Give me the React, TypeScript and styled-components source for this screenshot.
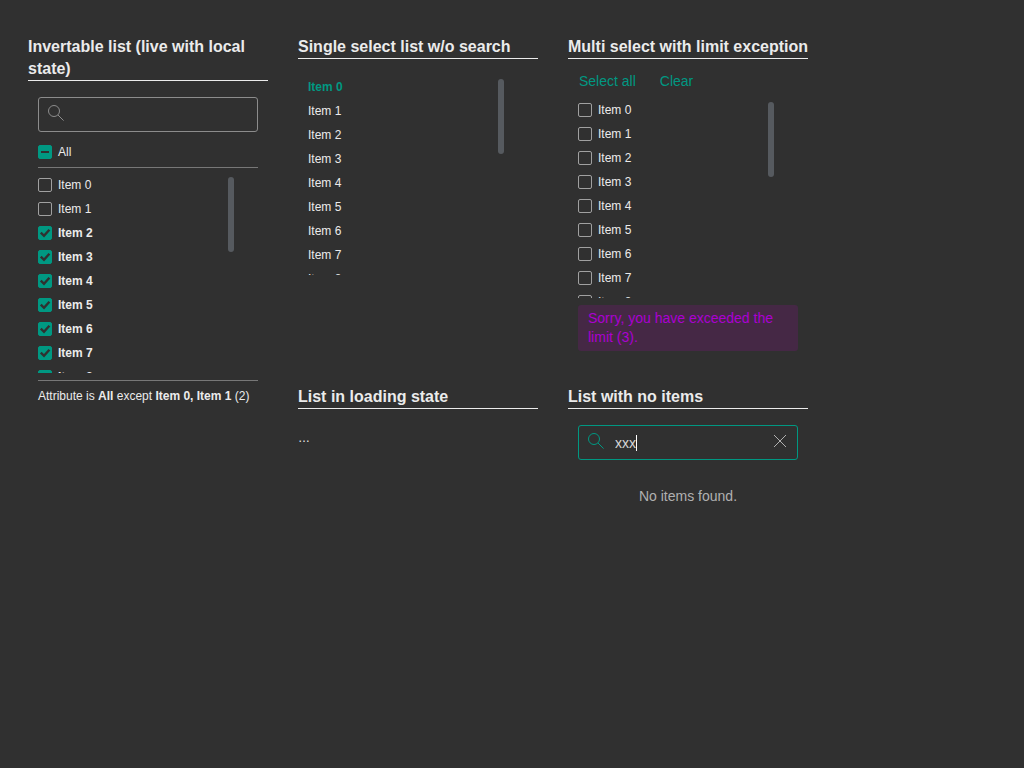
import React, { useState } from "react";
import styled, { createGlobalStyle, css } from "styled-components";

const teal = "#009882";
const page = "#303030";

const GlobalStyle = createGlobalStyle`
  *, *::before, *::after { box-sizing: border-box; }
  body {
    margin: 0;
    background: ${page};
    color: #ebebeb;
    font-family: Arial, "Liberation Sans", sans-serif;
    font-size: 14px;
    line-height: 19px;
    text-rendering: optimizeSpeed;
  }
`;

const Board = styled.main`
  display: grid;
  grid-template-columns: repeat(auto-fill, 240px);
  grid-template-rows: auto auto;
  align-items: start;
  gap: 35px 30px;
  padding: 36px 28px;
`;

const Card = styled.section<{ $tall?: boolean }>`
  grid-row: ${(p) => (p.$tall ? "span 2" : "auto")};
`;

const Title = styled.h4<{ $oneLine?: boolean }>`
  margin: 0;
  border-bottom: 1px solid #ebebeb;
  font-size: 16px;
  line-height: 22px;
  white-space: ${(p) => (p.$oneLine ? "nowrap" : "normal")};
`;

const Content = styled.div<{ $top: number }>`
  padding: ${(p) => p.$top}px 10px 0;
`;

const SearchBox = styled.label<{ $active?: boolean }>`
  display: flex;
  align-items: center;
  height: 35px;
  padding: 0 10px 0 9px;
  border: 1px solid ${(p) => (p.$active ? teal : "#8c8c8c")};
  border-radius: 3px;
  color: ${(p) => (p.$active ? teal : "#8c8c8c")};
`;

const SearchInput = styled.input<{ $fit?: boolean }>`
  min-width: 0;
  margin: 0 0 0 11px;
  padding: 2px 0 0;
  border: 0;
  outline: 0;
  background: transparent;
  color: #d6d6d6;
  font: inherit;
  caret-color: transparent;
  ${(p) => (p.$fit ? css`field-sizing: content;` : css`flex: 1;`)}
`;

const Caret = styled.span`
  width: 1px;
  height: 16px;
  background: #fff;
`;

const ClearButton = styled.button`
  display: flex;
  margin: 0 0 4px auto;
  padding: 0;
  border: 0;
  background: none;
  color: #b0b0b0;
  cursor: pointer;
`;

const Lens = styled.svg`
  flex: none;
  margin-bottom: 4px;
`;

const AllRow = styled.div`
  padding: 8px 0 3px;
  border-bottom: 1px solid #777;
`;

const ListBox = styled.div<{ $top: number }>`
  position: relative;
  width: 200px;
  height: 200px;
  margin-top: ${(p) => p.$top}px;
  overflow: hidden;
`;

const Thumb = styled.div`
  position: absolute;
  top: 4px;
  right: 4px;
  width: 6px;
  height: 75px;
  border-radius: 3px;
  background: #565a5f;
`;

const Items = styled.ul`
  margin: 0;
  padding: 0;
  list-style: none;
`;

const Row = styled.label<{ $bold?: boolean }>`
  display: flex;
  align-items: center;
  gap: 6px;
  height: 24px;
  font-size: 12px;
  font-weight: ${(p) => (p.$bold ? 700 : 400)};
  cursor: pointer;
`;

const PlainRow = styled.button<{ $selected: boolean }>`
  display: block;
  width: 100%;
  height: 24px;
  padding: 0;
  border: 0;
  background: none;
  color: ${(p) => (p.$selected ? teal : "#ebebeb")};
  font: inherit;
  font-size: 12px;
  font-weight: ${(p) => (p.$selected ? 700 : 400)};
  text-align: left;
  cursor: pointer;
`;

const Box = styled.span`
  display: grid;
  flex: none;
  width: 14px;
  height: 14px;
  > * { grid-area: 1 / 1; }
  > svg { pointer-events: none; }
`;

const Tick = styled.input<{ $filled: boolean }>`
  appearance: none;
  width: 14px;
  height: 14px;
  margin: 0;
  border: 1px solid ${(p) => (p.$filled ? teal : "#a0a0a0")};
  border-radius: 2px;
  background: ${(p) => (p.$filled ? teal : "transparent")};
`;

const Summary = styled.p`
  margin: 7px 0 0;
  padding-top: 6px;
  border-top: 1px solid #777;
  font-size: 12px;
`;

const Actions = styled.div`
  display: flex;
  gap: 24px;
  padding: 0 1px;
`;

const LinkButton = styled.button`
  padding: 0;
  border: 0;
  background: none;
  color: ${teal};
  font: inherit;
  cursor: pointer;
`;

const Warning = styled.div`
  margin-top: 7px;
  padding: 4px 10px;
  border-radius: 3px;
  background: #452845;
  color: #ab00d2;
`;

const Loading = styled.div`
  padding-top: 20px;
  font-size: 12px;
`;

const Empty = styled.p`
  margin: 27px 0 0;
  color: #b0b0b0;
  text-align: center;
`;

const names = Array.from({ length: 9 }, (_, i) => `Item ${i}`);

const LensIcon = () => (
  <Lens width="16" height="16" viewBox="0 0 16 16" fill="none" stroke="currentColor" aria-hidden="true">
    <circle cx="6" cy="6" r="5.5" />
    <path d="M10 10l5.6 5.6" />
  </Lens>
);

type CheckProps = { label: string; checked: boolean; partial?: boolean; onChange: () => void };

const CheckRow = ({ label, checked, partial, onChange }: CheckProps) => (
  <Row $bold={checked && !partial}>
    <Box>
      <Tick type="checkbox" checked={checked} $filled={checked} onChange={onChange} />
      {checked && (
        <svg width="14" height="14" viewBox="0 0 14 14" fill="none" stroke={page} strokeWidth={partial ? 2 : 2.4} aria-hidden="true">
          <path d={partial ? "M3 7h8" : "M2.8 6.6l3.2 3.2 5.4-6"} />
        </svg>
      )}
    </Box>
    {label}
  </Row>
);

const CheckList = ({ initial, top }: { initial: boolean[]; top: number }) => {
  const [checked, setChecked] = useState(initial);
  return (
    <ListBox $top={top}>
      <Items>
        {names.map((name, i) => (
          <li key={name}>
            <CheckRow
              label={name}
              checked={checked[i]}
              onChange={() => setChecked(checked.map((c, j) => (j === i ? !c : c)))}
            />
          </li>
        ))}
      </Items>
      <Thumb />
    </ListBox>
  );
};

export default function App() {
  const [selected, setSelected] = useState(0);
  const [query, setQuery] = useState("xxx");
  const [all, setAll] = useState(true);

  return (
    <>
      <GlobalStyle />
      <Board>
        <Card $tall>
          <Title>Invertable list (live with local state)</Title>
          <Content $top={16}>
            <SearchBox>
              <LensIcon />
              <SearchInput type="text" aria-label="Search" />
            </SearchBox>
            <AllRow>
              <CheckRow label="All" checked={all} partial onChange={() => setAll(!all)} />
            </AllRow>
            <CheckList top={5} initial={names.map((_, i) => i > 1)} />
            <Summary>
              Attribute is <b>All</b> except <b>Item 0, Item 1</b> (2)
            </Summary>
          </Content>
        </Card>

        <Card>
          <Title>Single select list w/o search</Title>
          <Content $top={16}>
            <ListBox $top={0}>
              <Items>
                {names.map((name, i) => (
                  <li key={name}>
                    <PlainRow type="button" $selected={i === selected} onClick={() => setSelected(i)}>
                      {name}
                    </PlainRow>
                  </li>
                ))}
              </Items>
              <Thumb />
            </ListBox>
          </Content>
        </Card>

        <Card>
          <Title $oneLine>Multi select with limit exception</Title>
          <Content $top={13}>
            <Actions>
              <LinkButton type="button">Select all</LinkButton>
              <LinkButton type="button">Clear</LinkButton>
            </Actions>
            <CheckList top={7} initial={names.map(() => false)} />
            <Warning role="alert">Sorry, you have exceeded the limit (3).</Warning>
          </Content>
        </Card>

        <Card>
          <Title>List in loading state</Title>
          <Loading role="status">…</Loading>
        </Card>

        <Card>
          <Title>List with no items</Title>
          <Content $top={16}>
            <SearchBox $active>
              <LensIcon />
              <SearchInput
                $fit
                type="text"
                aria-label="Search"
                value={query}
                onChange={(e) => setQuery(e.target.value)}
              />
              <Caret />
              <ClearButton type="button" aria-label="Clear search" onClick={() => setQuery("")}>
                <svg width="14" height="14" viewBox="0 0 14 14" fill="none" stroke="currentColor" aria-hidden="true">
                  <path d="M1 1l12 12M13 1L1 13" />
                </svg>
              </ClearButton>
            </SearchBox>
            <Empty>No items found.</Empty>
          </Content>
        </Card>
      </Board>
    </>
  );
}
